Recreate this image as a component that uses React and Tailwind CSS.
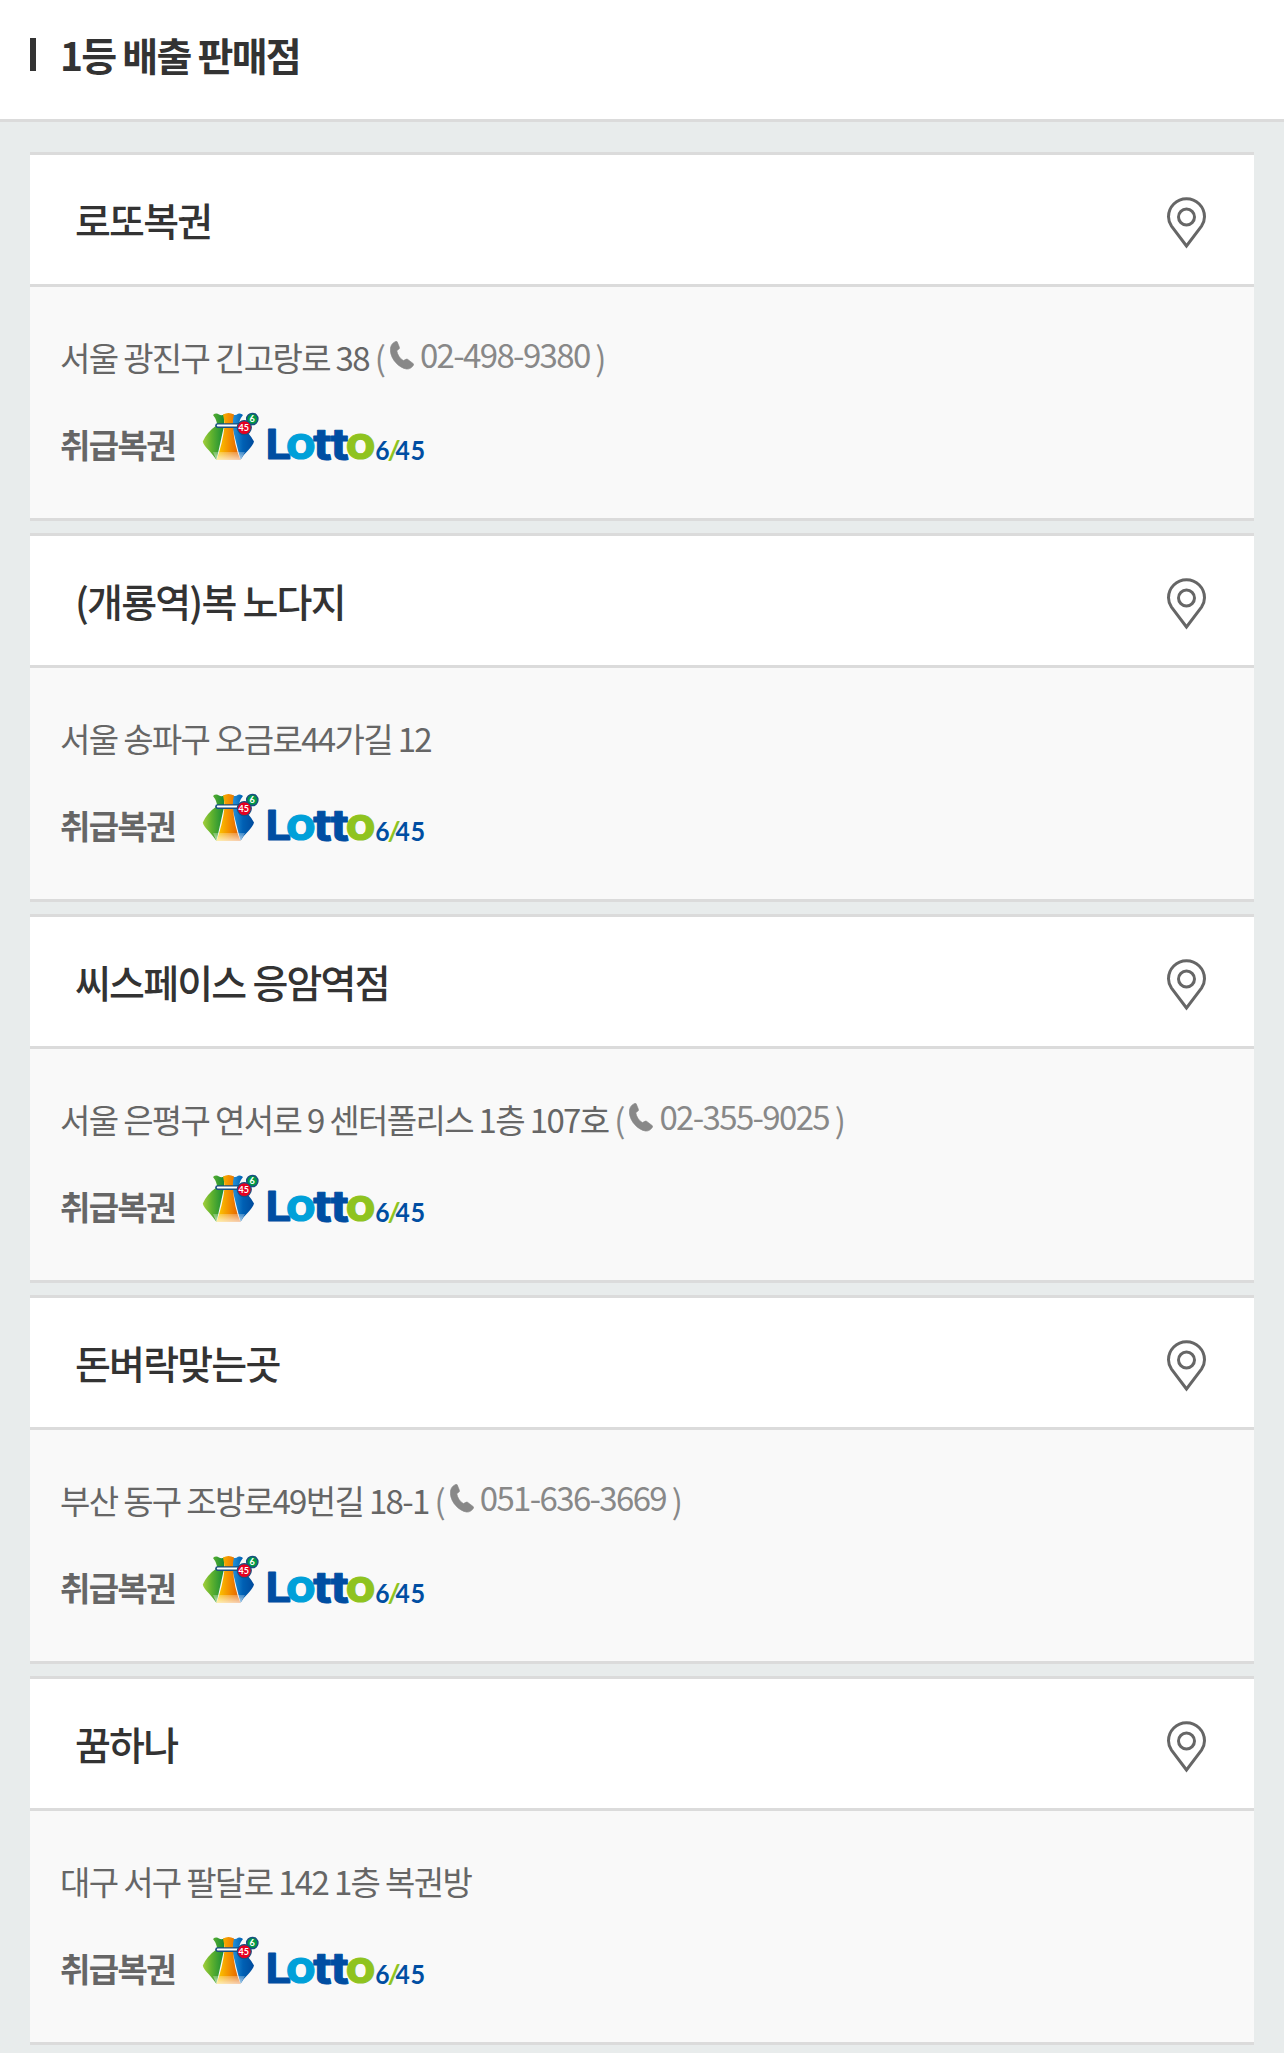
const stores = [
  { name: '로또복권', address: '서울 광진구 긴고랑로 38', phone: '02-498-9380' },
  { name: '(개룡역)복 노다지', address: '서울 송파구 오금로44가길 12' },
  { name: '씨스페이스 응암역점', address: '서울 은평구 연서로 9 센터폴리스 1층 107호', phone: '02-355-9025' },
  { name: '돈벼락맞는곳', address: '부산 동구 조방로49번길 18-1', phone: '051-636-3669' },
  { name: '꿈하나', address: '대구 서구 팔달로 142 1층 복권방' },
];

function PinIcon() {
  return (
    <svg className="mt-[6px] h-[52px] w-10" viewBox="0.5 0.3 40 52" fill="none" stroke="#666" strokeWidth="3">
      <path d="M20 49.3 L5 29.4 C3 26.5 2 23.5 2 20 A18 18 0 0 1 38 20 C38 23.5 37 26.5 35 29.4 Z" />
      <circle cx="20" cy="20.3" r="8" />
    </svg>
  );
}

function PhoneIcon() {
  return (
    <svg className="mb-1 h-[29px] w-6" viewBox="0 0 24 29" fill="#888" stroke="#888" strokeWidth=".6">
      <path d="M5.6 .4 C6.4 0 7 .2 7.3 1 L9.4 6.3 C9.7 7.1 9.5 7.6 8.9 8.1 L6.8 9.8 C7.5 13.7 9.7 17.4 13.4 19.6 L15.9 18.3 C16.6 17.9 17.2 18 17.8 18.4 L23.1 22.5 C23.8 23 23.9 23.6 23.4 24.3 C21.8 26.8 19.5 28.3 16.6 28.1 C9 26.7 1 18.8 .3 9.4 C.1 5 2 2 5.6 .4 Z" />
    </svg>
  );
}

function LottoLogo() {
  return (
    <svg className="h-[64px] w-[230px] tracking-normal" viewBox="0 0 230 64">
      <defs>
        <linearGradient id="bagGreen" x1="0" y1="0" x2="1" y2="0">
          <stop offset="0" stopColor="#a5cf3c" />
          <stop offset=".4" stopColor="#62b32e" />
          <stop offset="1" stopColor="#168c35" />
        </linearGradient>
        <linearGradient id="bagOrange" x1="0" y1="0" x2="1" y2="0">
          <stop offset="0" stopColor="#fdd000" />
          <stop offset=".5" stopColor="#f39200" />
          <stop offset="1" stopColor="#e25c00" />
        </linearGradient>
        <linearGradient id="bagBlue" x1="0" y1="0" x2="1" y2="0">
          <stop offset="0" stopColor="#2795dc" />
          <stop offset=".5" stopColor="#0060b4" />
          <stop offset="1" stopColor="#004a9c" />
        </linearGradient>
        <linearGradient id="bagShine" x1="0" y1="0" x2="0" y2="1">
          <stop offset="0" stopColor="#fff" stopOpacity=".25" />
          <stop offset="1" stopColor="#fff" stopOpacity=".7" />
        </linearGradient>
      </defs>
      <path d="M11 3 Q14 .5 17 2.5 Q19.5 3.8 22 2.4 L22 14 L14.5 48 Q11 43 7 38.5 Q1.5 33 .8 29.5 Q5 20 15 13 Q15 8 11 3 Z" fill="url(#bagGreen)" />
      <path d="M31 2.4 Q33.5 3.8 36 1.8 Q39 .8 41 3 Q37 8 37 13 Q47 20 52 29.5 Q51 33 46 38.5 Q41 43 38.5 48 L30 14 Z" fill="url(#bagBlue)" />
      <path d="M21 2.5 Q26.5 -.5 32 2.5 Q30.5 8 31 14 Q32 33 38.5 48 L14.5 48 Q21 30 22.5 14 Q22.5 8 21 2.5 Z" fill="url(#bagOrange)" />
      <path d="M11 40 H43 L38.5 48 H14.5 Z" fill="url(#bagShine)" />
      <path d="M15.5 13.6 H36" stroke="#174f81" strokeWidth="4.6" strokeLinecap="round" />
      <path d="M15.8 13.6 H36" stroke="#fff" strokeWidth="2" strokeLinecap="round" />
      <circle cx="50.3" cy="7" r="5.6" fill="#009944" stroke="#174f81" strokeWidth="1.5" />
      <circle cx="42.3" cy="15.6" r="7" fill="#e60020" stroke="#174f81" strokeWidth="1.2" />
      <g fontFamily="Lato, sans-serif" fontWeight="700" fill="#fff" textAnchor="middle">
        <text x="50" y="10.2" fontSize="9">6</text>
        <text x="41.8" y="18.8" fontSize="9">45</text>
      </g>
      <g fontFamily="Inter, sans-serif" fontWeight="700" fill="#004ea2" stroke="#004ea2" strokeWidth="1" strokeLinejoin="round">
        <text transform="translate(63.6 47.3) scale(1.12 1)" fontSize="41">L</text>
        <text transform="translate(111.2 47.5) scale(1.14 1)" fontSize="44">t</text>
        <text transform="translate(128.4 47.5) scale(1.14 1)" fontSize="44">t</text>
        <text transform="translate(83.8 47.3) scale(1.09 1)" fontSize="45" fill="#00a0d9" stroke="#00a0d9">o</text>
        <text transform="translate(143.6 47.3) scale(1.09 1)" fontSize="45" fill="#8fc31f" stroke="#8fc31f">o</text>
      </g>
      <g fontFamily="Lato, sans-serif" fontWeight="700" fontSize="26" fill="#004ea2">
        <text transform="translate(173.3 47.6) scale(.95 1)">6</text>
        <text transform="translate(185.4 47.6) scale(1.08 1)" fill="#8fc31f">/</text>
        <text transform="translate(193.6 47.6) scale(.95 1)">4</text>
        <text transform="translate(208.4 47.6) scale(.97 1)">5</text>
      </g>
    </svg>
  );
}

function StoreCard({ store }) {
  return (
    <li className="h-[369px] border-y-3 border-[#dbdbdb] bg-[#f9f9f9]">
      <div className="flex h-[132px] items-center justify-between border-b-3 border-[#dbdbdb] bg-white pr-[47px] pl-[45px]">
        <h3 className="-mt-px text-[39px] leading-[58px] font-medium tracking-[-0.046em] text-[#333]">{store.name}</h3>
        <PinIcon />
      </div>
      <div className="px-[30px] pt-[45px] text-[33px] leading-[50px] tracking-[-0.05em] text-[#666]">
        <p className="flex h-[50px] items-center whitespace-pre">
          {store.address}
          {store.phone && (
            <span className="flex items-center text-[#888]">
              <span className="-mt-px"> ( </span>
              <PhoneIcon />
              <span className="-mt-[7px] ml-[6px]">{store.phone}</span>
              <span className="-mt-px"> )</span>
            </span>
          )}
        </p>
        <div className="mt-[30px] flex items-start">
          <strong className="mt-[7px] mr-[27px] font-bold">취급복권</strong>
          <LottoLogo />
        </div>
      </div>
    </li>
  );
}

export default function App() {
  return (
    <div className="h-[2053px] overflow-hidden bg-[#e8ecec] font-['Noto_Sans_CJK_KR',sans-serif]">
      <header className="flex h-[122px] items-start border-b-3 border-[#dbdbdb] bg-white px-[30px]">
        <span className="mt-[38px] h-[33px] w-[6px] bg-[#333]" />
        <h2 className="mt-[25px] ml-[24px] text-[39px] leading-[58px] font-bold tracking-[-0.046em] text-[#333]">1등 배출 판매점</h2>
      </header>
      <ul className="flex flex-col gap-3 px-[30px] pt-[30px]">
        {stores.map((store) => (
          <StoreCard key={store.name} store={store} />
        ))}
      </ul>
    </div>
  );
}
